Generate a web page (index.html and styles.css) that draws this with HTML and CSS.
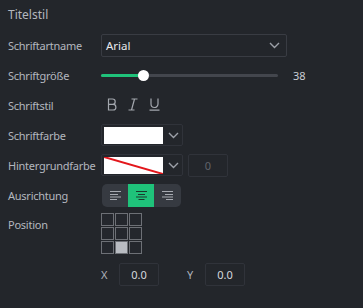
FILE: index.html
```html
<!DOCTYPE html>
<html>
<head>
<meta charset="utf-8">
<link rel="stylesheet" href="styles.css">
</head>
<body>
<div class="panel">
  <div class="title">Titelstil</div>

  <div class="row">
    <div class="label">Schriftartname</div>
    <div class="select">
      <span>Arial</span>
      <svg class="chev" width="11" height="7" viewBox="0 0 11 7"><path d="M1 1l4.5 4.5L10 1" fill="none" stroke="#9ca0a8" stroke-width="1.4"/></svg>
    </div>
  </div>

  <div class="row">
    <div class="label">Schriftgröße</div>
    <div class="slider">
      <div class="track"><div class="fill" style="width:42px"></div><div class="thumb" style="left:42px"></div></div>
    </div>
    <div class="value">38</div>
  </div>

  <div class="row">
    <div class="label">Schriftstil</div>
    <div class="styles">
      <svg width="10" height="13" viewBox="0 0 10 13"><path d="M1.5 1h4a2.7 2.7 0 0 1 0 5.4h-4zM1.5 6.4h4.6a2.8 2.8 0 0 1 0 5.6h-4.6z" fill="none" stroke="#a3a7ae" stroke-width="1.2"/></svg>
      <svg width="10" height="13" viewBox="0 0 10 13"><path d="M3.5 1h6M0.5 12h6M6.5 1l-3 11" fill="none" stroke="#a3a7ae" stroke-width="1.2"/></svg>
      <svg width="11" height="13" viewBox="0 0 11 13"><path d="M2 0.5v5.5a3.5 3.5 0 0 0 7 0v-5.5M0.5 12.2h10" fill="none" stroke="#a3a7ae" stroke-width="1.2"/></svg>
    </div>
  </div>

  <div class="row">
    <div class="label">Schriftfarbe</div>
    <div class="color">
      <div class="swatch"></div>
      <svg class="chev2" width="11" height="7" viewBox="0 0 11 7"><path d="M1 1l4.5 4.5L10 1" fill="none" stroke="#9ca0a8" stroke-width="1.4"/></svg>
    </div>
  </div>

  <div class="row">
    <div class="label">Hintergrundfarbe</div>
    <div class="color">
      <div class="swatch none"><svg width="59" height="17" viewBox="0 0 59 17" preserveAspectRatio="none"><path d="M0 0L59 17" stroke="#e3161b" stroke-width="2"/></svg></div>
      <svg class="chev2" width="11" height="7" viewBox="0 0 11 7"><path d="M1 1l4.5 4.5L10 1" fill="none" stroke="#9ca0a8" stroke-width="1.4"/></svg>
    </div>
    <div class="num dim">0</div>
  </div>

  <div class="row">
    <div class="label">Ausrichtung</div>
    <div class="align">
      <div class="seg"><svg width="11" height="9" viewBox="0 0 11 9"><path d="M0 0.5h11M0 3.5h8M0 6h11M0 8.5h7" stroke="#a7abb2" stroke-width="1"/></svg></div>
      <div class="seg on"><svg width="11" height="9" viewBox="0 0 11 9"><path d="M0 0.5h11M2 3.5h7M0 6h11M2.5 8.5h6" stroke="#1b3a2c" stroke-width="1"/></svg></div>
      <div class="seg"><svg width="11" height="9" viewBox="0 0 11 9"><path d="M0 0.5h11M3 3.5h8M0 6h11M4 8.5h7" stroke="#a7abb2" stroke-width="1"/></svg></div>
    </div>
  </div>

  <div class="posrow">
    <div class="label plabel">Position</div>
    <div class="grid">
      <div class="cell"></div><div class="cell"></div><div class="cell"></div>
      <div class="cell"></div><div class="cell"></div><div class="cell"></div>
      <div class="cell"></div><div class="cell sel"></div><div class="cell"></div>
    </div>
  </div>

  <div class="xyrow">
    <span class="axis">X</span>
    <div class="num">0.0</div>
    <span class="axis ay">Y</span>
    <div class="num">0.0</div>
  </div>
</div>
</body>
</html>
```
FILE: styles.css
```css
html, body {
  margin: 0;
  padding: 0;
  background: #23262b;
}
body {
  width: 363px;
  height: 308px;
  overflow: hidden;
  font-family: "Noto Sans", "Open Sans", sans-serif;
  font-size: 11px;
  color: #b3b7bf;
}
.panel {
  padding-left: 8px;
}
.title {
  height: 30px;
  line-height: 30px;
  font-size: 12px;
  color: #b3b7bf;
}
.row {
  height: 30px;
  display: flex;
  align-items: center;
}
.label {
  width: 93px;
  flex: none;
  white-space: nowrap;
  letter-spacing: -0.25px;
}
.select {
  height: 21px;
  border: 1px solid #393c43;
  border-radius: 2px;
  display: flex;
  align-items: center;
  justify-content: space-between;
  padding: 0 6px 0 4px;
  color: #e6e8ec;
  width: 174px;
  font-size: 11.5px;
}
.chev { margin-top: 1px; }
.slider {
  width: 177px;
  height: 10px;
  display: flex;
  align-items: center;
}
.track {
  position: relative;
  width: 177px;
  height: 3px;
  background: #43464d;
  border-radius: 2px;
}
.fill {
  height: 3px;
  background: #1fc27a;
  border-radius: 2px;
}
.thumb {
  position: absolute;
  top: -4px;
  width: 11px;
  height: 11px;
  margin-left: -5.5px;
  border-radius: 50%;
  background: #ffffff;
}
.value {
  margin-left: 15px;
  color: #c9cdd4;
}
.styles {
  display: flex;
  align-items: center;
  gap: 11px;
  padding-left: 6px;
  margin-top: -2px;
}
.color {
  width: 78px;
  height: 20px;
  border: 1px solid #30333a;
  border-radius: 2px;
  display: flex;
  align-items: center;
  padding: 0 0 0 2px;
}
.swatch {
  width: 59px;
  height: 17px;
  background: #ffffff;
  overflow: hidden;
}
.swatch svg { display: block; }
.chev2 { margin-left: 5px; }
.num {
  width: 38px;
  height: 21px;
  border: 1px solid #30333a;
  border-radius: 2px;
  display: flex;
  align-items: center;
  justify-content: center;
  color: #d5d8de;
}
.num.dim {
  margin-left: 5px;
  color: #60636a;
}
.align {
  display: flex;
  width: 79px;
  height: 23px;
  background: #363a41;
  border-radius: 5px;
  overflow: hidden;
  margin-left: 1px;
}
.seg {
  width: 26px;
  display: flex;
  align-items: center;
  justify-content: center;
}
.seg.on { background: #1fc27a; }
.seg svg { display: block; }
.posrow {
  display: flex;
  margin-top: 3px;
}
.plabel {
  line-height: 24px;
}
.grid {
  display: grid;
  grid-template-columns: 13px 13px 13px;
  grid-template-rows: 13px 13px 13px;
  gap: 1px;
}
.cell {
  border: 1px solid #6d7076;
  background: #24272d;
  box-sizing: border-box;
}
.cell.sel {
  background: #b9bcc2;
}
.xyrow {
  display: flex;
  align-items: center;
  margin-top: 9px;
  padding-left: 93px;
}
.axis {
  width: 18px;
  color: #aeb2ba;
}
.ay {
  margin-left: 28px;
}
```
